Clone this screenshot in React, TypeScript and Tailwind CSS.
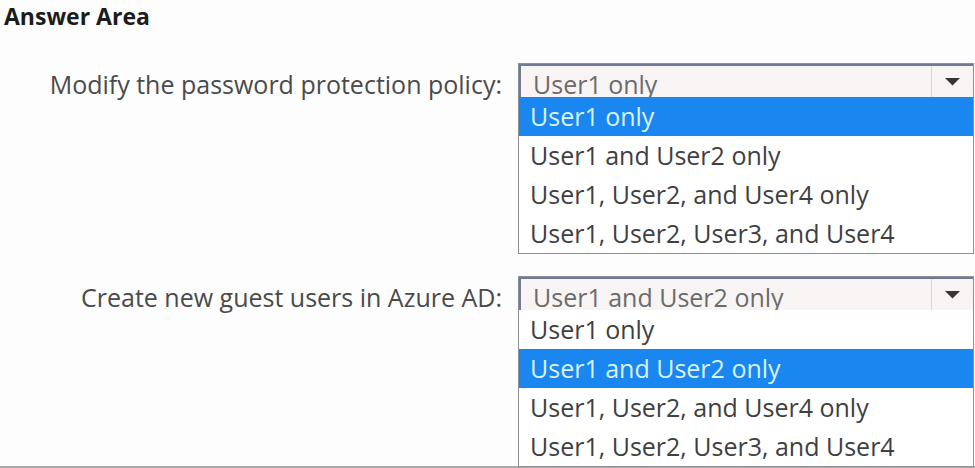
import { Fragment } from "react";

const options = [
  "User1 only",
  "User1 and User2 only",
  "User1, User2, and User4 only",
  "User1, User2, User3, and User4",
];

function Dropdown(props: { value: string; selected: number }) {
  return (
    <div className="w-[456px] border border-[#8d9096] bg-white">
      <div className="flex h-[33px] items-stretch overflow-hidden border-t-2 border-l-2 border-[#6f7a94] bg-[#f8f4f4]">
        <div className="flex-1 pl-[12px] pt-[1px] leading-[34px] text-[#6b6b6b]">{props.value}</div>
        <div className="flex w-[42px] items-center justify-center border-l border-[#d8d8d8]">
          <svg width="17" height="9" viewBox="0 0 17 9">
            <path d="M1 1 L16 1 L8.5 8.5 Z" fill="#3a3535" />
          </svg>
        </div>
      </div>
      {options.map((opt, i) => (
        <div
          key={opt}
          className={
            i === props.selected
              ? "h-[39px] bg-[#1a86f0] pl-[11px] leading-[39px] text-[#d9f2ff]"
              : "h-[39px] pl-[11px] leading-[39px] text-[#3f3f3f]"
          }
        >
          {opt}
        </div>
      ))}
    </div>
  );
}

export default function App() {
  const rows = [
    { label: "Modify the password protection policy:", value: "User1 only", selected: 0 },
    { label: "Create new guest users in Azure AD:", value: "User1 and User2 only", selected: 1 },
  ];

  return (
    <div className="h-[468px] w-[975px] bg-[#fdfdfd] font-['Open_Sans',sans-serif]">
      <div className="flex h-[466px] flex-col">
        <div className="pl-[4px] text-[23px] font-bold leading-[32px] text-[#1c1c1c]">Answer Area</div>
        <div className="mt-[31px] grid grid-cols-[502px_auto] gap-x-[16px] gap-y-[22px] text-[25px]">
          {rows.map((r) => (
            <Fragment key={r.label}>
              <div className="pt-[4px] text-right leading-[34px] text-[#4a4a4a]">{r.label}</div>
              <Dropdown value={r.value} selected={r.selected} />
            </Fragment>
          ))}
        </div>
      </div>
      <div className="h-[2px] bg-[#a9a9a9]" />
    </div>
  );
}
